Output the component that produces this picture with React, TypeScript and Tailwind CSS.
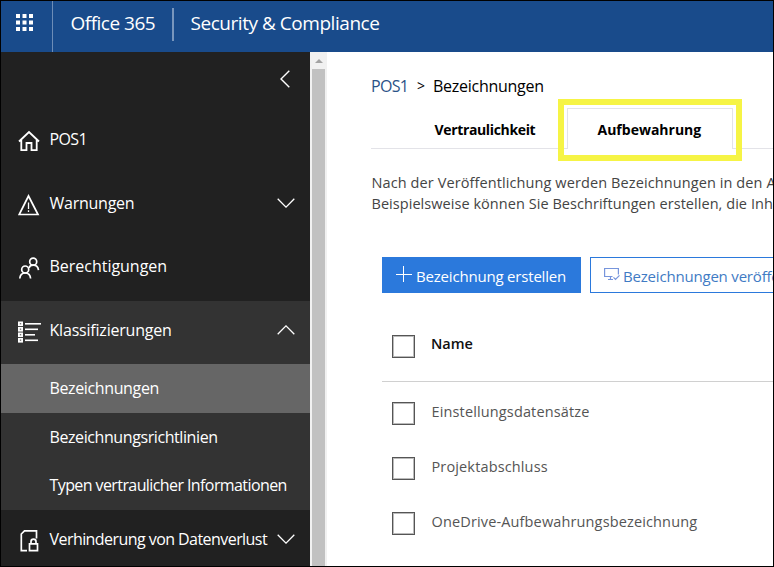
import type { ReactNode } from "react";

function Waffle() {
  const cells = [0, 6.5, 13];
  return (
    <svg width="17" height="17" viewBox="0 0 17 17" fill="#fff">
      {cells.map((y) => cells.map((x) => <rect key={`${x}-${y}`} x={x} y={y} width="4" height="4" />))}
    </svg>
  );
}

function Chevron({ up = false }: { up?: boolean }) {
  return (
    <svg className="shrink-0" width="18" height="10" viewBox="0 0 18 10" fill="none" stroke="#fff" strokeWidth="1.3">
      <path d={up ? "M.7 9.2 9 .9l8.3 8.3" : "M.7.8 9 9.1 17.3.8"} />
    </svg>
  );
}

function HomeIcon() {
  return (
    <svg width="22" height="22" viewBox="0 0 22 22" fill="none" stroke="#fff" strokeWidth="1.8">
      <path d="M1 11.5 11 2l10 9.5M3.300 10v10.200h5.200v-7.200h5v7.200h5.200V10" />
    </svg>
  );
}

function WarningIcon() {
  return (
    <svg width="22" height="22" viewBox="0 0 22 22" fill="none" stroke="#fff" strokeWidth="1.7">
      <path d="M10.500 2 1.200 20.500h18.800z" />
      <path d="M10.500 8.500v6.500M10.500 16.300v1.700" strokeWidth="1.3" />
    </svg>
  );
}

function PeopleIcon() {
  return (
    <svg width="22" height="22" viewBox="0 0 22 22" fill="none" stroke="#fff" strokeWidth="1.7">
      <circle cx="15.200" cy="4.700" r="3.500" />
      <circle cx="7.200" cy="12.500" r="3.500" />
      <path d="M11 11c.5-1.800 2.200-2.800 4.200-2.800 2.900 0 5 2 5.300 5M1.800 21.500c.3-3.500 2.400-5.500 5.400-5.500s5.100 2 5.400 5.500" />
    </svg>
  );
}

function ListIcon() {
  return (
    <svg width="24" height="22" viewBox="0 0 24 22">
      {[
        [0.5, 16],
        [6, 13],
        [11.5, 10],
        [17, 13],
      ].map(([y, w]) => (
        <g key={y}>
          <rect x="0" y={y} width="5" height="4.600" fill="#fff" />
          <rect x="1.800" y={y + 1.5} width="1.400" height="1.400" fill="#777" />
          <rect x="7" y={y + 1.5} width={w} height="1.600" fill="#fff" />
        </g>
      ))}
    </svg>
  );
}

function DocLockIcon() {
  return (
    <svg width="22" height="24" viewBox="0 0 22 24" fill="none" stroke="#fff" strokeWidth="1.7">
      <path d="M9 21.700H3.300V5L6.500 1.800h12V9.500" />
      <path d="M11.500 14.800h8v6.900h-8zM13 14.500v-2c0-3.300 5-3.300 5 0v2" />
    </svg>
  );
}

function NavRow({
  icon,
  label,
  tracking,
  chevron,
  className,
}: {
  icon: ReactNode;
  label: string;
  tracking: string;
  chevron?: "up" | "down";
  className: string;
}) {
  return (
    <div className={`flex shrink-0 items-center pl-[17px] pr-[15px] ${className}`}>
      <span className="mt-[3px] w-[31.5px] shrink-0">{icon}</span>
      <span className={`min-w-0 grow whitespace-nowrap text-[16px] leading-6 ${tracking}`}>{label}</span>
      {chevron && <Chevron up={chevron === "up"} />}
    </div>
  );
}

function SubRow({ label, className }: { label: string; className: string }) {
  return (
    <div className={`flex shrink-0 items-center whitespace-nowrap pl-[48.5px] text-[16px] leading-6 ${className}`}>
      {label}
    </div>
  );
}

function Checkbox() {
  return <span className="size-[23px] shrink-0 border border-[#555] inset-ring inset-ring-[#bbb]" />;
}

function CheckRow({ label }: { label: string }) {
  return (
    <div className="flex h-[55px] shrink-0 items-start pl-[10px]">
      <Checkbox />
      <span className="ml-[16.5px] whitespace-nowrap leading-5 tracking-[0.14px]">{label}</span>
    </div>
  );
}

export default function App() {
  return (
    <div className="flex h-[567px] w-[774px] flex-col overflow-hidden border border-black bg-white font-['Open_Sans',sans-serif]">
      <header className="flex h-[51px] shrink-0 bg-[#194b8b] text-[19px] leading-[26px] text-white">
        <div className="flex w-[52px] items-start border-r border-[#6d8db7] pl-[15px] pt-[13px]">
          <Waffle />
        </div>
        <span className="w-[119px] whitespace-nowrap pl-[17.5px] pt-[9px] tracking-[-0.5px]">Office 365</span>
        <div className="mt-[7px] h-[33px] w-[2px] bg-[#7896bd]" />
        <span className="whitespace-nowrap pl-[16.5px] pt-[9px] tracking-[-0.46px]">Security &amp; Compliance</span>
      </header>

      <div className="flex min-h-0 grow">
        <nav className="flex w-[309px] shrink-0 flex-col overflow-hidden bg-[#212121] text-white">
          <div className="flex h-[56px] shrink-0 justify-end pr-5 pt-[18px]">
            <svg width="10" height="18" viewBox="0 0 10 18" fill="none" stroke="#fff" strokeWidth="1.4">
              <path d="M9.300.7 1 9l8.300 8.300" />
            </svg>
          </div>
          <NavRow icon={<HomeIcon />} label="POS1" tracking="-mt-[2px] tracking-[-0.6px]" className="h-[63px]" />
          <NavRow
            icon={<WarningIcon />}
            label="Warnungen"
            tracking="tracking-[-0.25px]"
            chevron="down"
            className="h-[64px]"
          />
          <NavRow
            icon={<PeopleIcon />}
            label="Berechtigungen"
            tracking="-mt-[2px] tracking-[-0.02px]"
            className="mb-[3px] h-[63px]"
          />
          <NavRow
            icon={<ListIcon />}
            label="Klassifizierungen"
            tracking="-mt-[1px] tracking-[-0.2px]"
            chevron="up"
            className="h-[63px] bg-[#333] pb-[5px]"
          />
          <SubRow label="Bezeichnungen" className="h-[49px] bg-[#666] pb-[2px] tracking-[-0.37px]" />
          <SubRow label="Bezeichnungsrichtlinien" className="h-[48px] bg-[#333] tracking-[-0.41px]" />
          <SubRow
            label="Typen vertraulicher Informationen"
            className="h-[49px] bg-[#333] pb-[2px] tracking-[-0.59px]"
          />
          <NavRow
            icon={<DocLockIcon />}
            label="Verhinderung von Datenverlust"
            tracking="tracking-[-0.56px]"
            chevron="down"
            className="h-[58px]"
          />
        </nav>

        <div className="flex w-[17px] shrink-0 flex-col items-center bg-[#f1f1f1]">
          <svg className="mt-[7px] shrink-0" width="8" height="4" viewBox="0 0 8 4" fill="#a3a3a3">
            <path d="M4 0 8 4H0z" />
          </svg>
          <div className="mt-[6px] w-[13px] grow bg-[#c1c1c1]" />
        </div>

        <main className="flex min-w-0 grow flex-col overflow-hidden pl-11 text-[14.5px]">
          <div className="mt-[22px] flex h-6 shrink-0 text-[16px] leading-6 text-black">
            <span className="w-[46px] tracking-[-0.7px] text-[#2b5288]">POS1</span>
            <span className="w-[16px] text-[14px]">&gt;</span>
            <span className="tracking-[-0.27px]">Bezeichnungen</span>
          </div>

          <div className="mt-[10px] flex h-[41px] shrink-0 whitespace-nowrap text-[14px] font-bold leading-[44px] text-black">
            <div className="w-[196px] border-b border-[#e3e3e8] pl-[63.5px] tracking-[-0.35px]">Vertraulichkeit</div>
            <div className="relative w-[166px] border-x border-t border-[#e3e3e8] pl-[29.5px] leading-[42px]">
              Aufbewahrung
              <span className="absolute -left-[10px] -top-[10px] h-[62px] w-[184px] border-[6px] border-[#f6f445]" />
            </div>
            <div className="grow border-b border-[#e3e3e8]" />
          </div>

          <p className="mt-[23px] h-[42px] shrink-0 whitespace-nowrap pl-[0.5px] leading-[21px] text-[#444]">
            <span className="block tracking-[0.1px]">Nach der Veröffentlichung werden Bezeichnungen in den A</span>
            <span className="block tracking-[0.05px]">Beispielsweise können Sie Beschriftungen erstellen, die Inhalte</span>
          </p>

          <div className="ml-[11px] mt-[43px] flex h-9 shrink-0 gap-[9px] text-[15px] leading-9 tracking-[-0.19px]">
            <div className="flex w-[199px] shrink-0 items-center whitespace-nowrap bg-[#2b79dc] pl-[14px] text-white">
              <svg className="-mt-[3px] mr-[4px] shrink-0" width="16" height="16" viewBox="0 0 16 16" stroke="#fff">
                <path d="M0 8.500h16M7.500 0v16" />
              </svg>
              <span className="pt-[1px]">Bezeichnung erstellen</span>
            </div>
            <div className="flex w-[240px] shrink-0 items-center whitespace-nowrap border border-[#2b79dc] pl-[12.5px] text-[#3f7bc4]">
              <svg
                className="-mt-[2px] mr-[3.5px] shrink-0"
                width="16"
                height="14"
                viewBox="0 0 16 14"
                fill="none"
                stroke="#7795dc"
                strokeWidth="1.2"
              >
                <path d="M8.500 9.500H.6V1.500h13.800v6M4 12.500h5M6.500 9.500v3M9.500 10.300l2 2L15.500 8.300" />
              </svg>
              <span className="pt-[1px]">Bezeichnungen veröffentlichen</span>
            </div>
          </div>

          <div className="ml-[11px] mt-[42px] flex h-[47px] shrink-0 border-b border-[#d0d0d0] pl-[10px]">
            <Checkbox />
            <span className="-mt-px ml-4 font-semibold leading-5 text-[#111]">Name</span>
          </div>
          <div className="ml-[11px] pt-5 text-[#555]">
            <CheckRow label="Einstellungsdatensätze" />
            <CheckRow label="Projektabschluss" />
            <CheckRow label="OneDrive-Aufbewahrungsbezeichnung" />
          </div>
        </main>
      </div>
    </div>
  );
}
